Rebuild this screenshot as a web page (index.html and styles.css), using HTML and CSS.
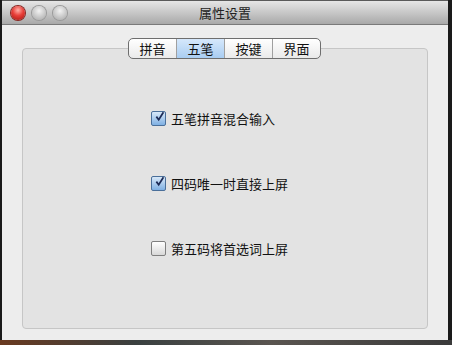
FILE: index.html
```html
<!DOCTYPE html>
<html lang="zh">
<head>
  <meta charset="UTF-8">
  <title>属性设置</title>
  <link rel="stylesheet" href="styles.css">
</head>
<body>
  <div class="window">
    <div class="titlebar">
      <div class="lights">
        <span class="light close"></span>
        <span class="light"></span>
        <span class="light"></span>
      </div>
      <div class="title">属性设置</div>
    </div>
    <div class="content">
      <div class="tabbox">
        <div class="tabs">
          <span class="tab">拼音</span>
          <span class="tab active">五笔</span>
          <span class="tab">按键</span>
          <span class="tab">界面</span>
        </div>
        <div class="options">
          <label class="option"><span class="check on"><svg viewBox="0 0 14 14" width="14" height="14"><path d="M3 6.5 L6 10.5 L12 1" fill="none" stroke="#1c2a55" stroke-width="2.2"/></svg></span>五笔拼音混合输入</label>
          <label class="option"><span class="check on"><svg viewBox="0 0 14 14" width="14" height="14"><path d="M3 6.5 L6 10.5 L12 1" fill="none" stroke="#1c2a55" stroke-width="2.2"/></svg></span>四码唯一时直接上屏</label>
          <label class="option"><span class="check"></span>第五码将首选词上屏</label>
        </div>
      </div>
    </div>
  </div>
  <div class="desk"></div>
</body>
</html>
```

FILE: styles.css
```css
body {
  margin: 0;
  width: 452px;
  height: 345px;
  background: #1a1a1a;
  font-family: "Noto Sans CJK SC", "Noto Sans", sans-serif;
  overflow: hidden;
}
.window {
  margin-left: 2px;
  width: 446px;
  height: 340px;
  background: #ededed;
  display: flex;
  flex-direction: column;
}
.titlebar {
  height: 23px;
  border-top: 1px solid #5a5a5a;
  border-bottom: 1px solid #7a7a7a;
  background: linear-gradient(#e6e6e6, #a9a9a9);
  display: flex;
  align-items: center;
  position: relative;
}
.lights {
  display: flex;
  gap: 7px;
  padding-left: 9px;
}
.light {
  width: 14px;
  height: 14px;
  border-radius: 50%;
  background: radial-gradient(circle at 50% 35%, #f2f2f2, #c4c4c4 60%, #a8a8a8);
  box-shadow: 0 0 0 1px #9a9a9a;
}
.light.close {
  background: radial-gradient(circle at 50% 30%, #ffb0a8, #e8403a 45%, #a8140f);
  box-shadow: 0 0 0 1px #8a2520;
}
.title {
  position: absolute;
  left: 0;
  right: 0;
  text-align: center;
  font-size: 13px;
  color: #222;
}
.content {
  flex: 1;
  padding: 23px 20px 11px 20px;
}
.tabbox {
  height: 100%;
  box-sizing: border-box;
  background: #e3e3e3;
  border: 1px solid #c6c6c6;
  border-radius: 4px;
  position: relative;
}
.tabs {
  position: absolute;
  top: -11px;
  left: 105px;
  display: flex;
  height: 19px;
  border: 1px solid #6e6e6e;
  border-radius: 5px;
  background: linear-gradient(#ffffff, #eaeaea);
  overflow: hidden;
}
.tab {
  width: 47px;
  text-align: center;
  font-size: 13px;
  line-height: 19px;
  color: #111;
  border-left: 1px solid #a0a0a0;
}
.tab:first-child {
  border-left: none;
}
.tab.active {
  background: linear-gradient(#d6e8fb, #a9cdf2);
}
.options {
  display: flex;
  flex-direction: column;
  gap: 47px;
  padding: 60px 0 0 128px;
}
.option {
  display: flex;
  align-items: center;
  gap: 5px;
  font-size: 13px;
  color: #111;
  height: 18px;
}
.check {
  width: 13px;
  height: 13px;
  border: 1px solid #7f7f7f;
  border-radius: 2px;
  background: linear-gradient(#ffffff, #d8d8d8);
  display: flex;
  align-items: center;
  justify-content: center;
}
.check.on {
  background: linear-gradient(#d8e8f8, #7fb0e3);
  border-color: #4a6f9a;
}
.check svg {
  margin-top: -3px;
  margin-left: 2px;
}
.desk {
  height: 5px;
  background: linear-gradient(90deg, #6a3a20, #3a4040 30%, #5a5550 60%, #3a3a3a);
}
```
